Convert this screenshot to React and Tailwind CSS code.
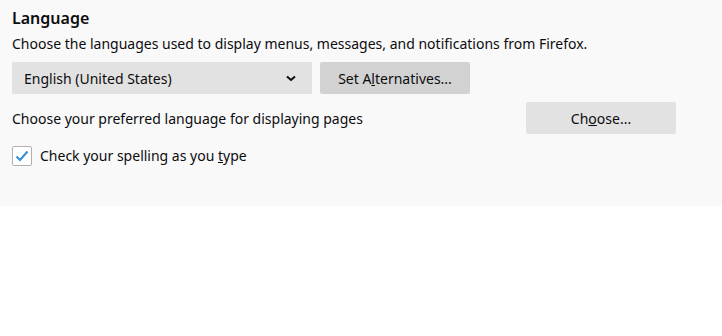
import React, { useState } from "react";

function App() {
  const [checked, setChecked] = useState(true);

  return (
    <div className="w-[722px] h-[336px] bg-white" style={{ fontFamily: '"Noto Sans", "Open Sans", sans-serif' }}>
      <div className="bg-[#f9f9fa] h-[206px] px-3 pt-[6px] text-[#0c0c0d]">
        <h1 className="text-[16px] font-semibold leading-[24px]">Language</h1>

        <p className="text-[14px] leading-[20px] mt-[4px]">
          Choose the languages used to display menus, messages, and notifications from Firefox.
        </p>

        <div className="flex gap-2 mt-[8px]">
          <div className="w-[300px] h-8 bg-[#e2e2e3] flex items-center justify-between pl-3 pr-4 text-[14px]">
            <span>English (United States)</span>
            <svg width="10" height="7" viewBox="0 0 10 7">
              <path d="M1 1.5 L5 5 L9 1.5" fill="none" stroke="#0c0c0d" strokeWidth="2" />
            </svg>
          </div>
          <button className="w-[150px] h-8 bg-[#d2d2d3] text-[14px] rounded-[2px]">
            Set A<span className="underline">l</span>ternatives...
          </button>
        </div>

        <div className="flex items-center justify-between mt-2 pr-[34px]">
          <span className="text-[14px]">Choose your preferred language for displaying pages</span>
          <button className="w-[150px] h-8 bg-[#e2e2e3] text-[14px] rounded-[2px]">
            Ch<span className="underline">o</span>ose...
          </button>
        </div>

        <label className="flex items-center gap-2 mt-[11px] text-[14px]">
          <span
            onClick={() => setChecked(!checked)}
            className="w-5 h-5 bg-white border border-[#b1b1b3] rounded-[2px] flex items-center justify-center"
          >
            {checked && (
              <svg width="14" height="12" viewBox="0 0 14 12">
                <path d="M1.5 6.5 L5 10 L12.5 1.5" fill="none" stroke="#2f8fd8" strokeWidth="2" />
              </svg>
            )}
          </span>
          <span>
            Check your spelling as you <span className="underline">t</span>ype
          </span>
        </label>
      </div>
    </div>
  );
}

export default App;
